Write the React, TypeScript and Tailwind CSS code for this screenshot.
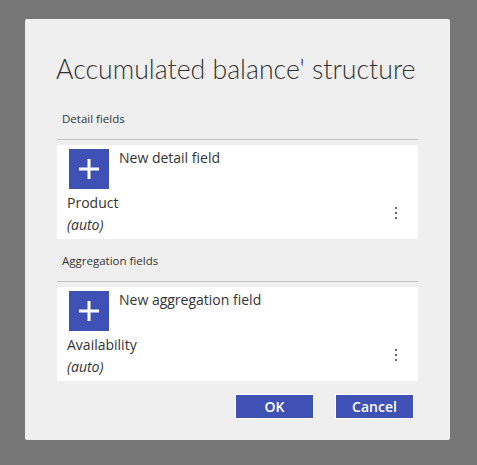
import React from 'react';

const PlusBox: React.FC = () => (
  <div className="w-10 h-10 bg-[#3f51b5] flex items-center justify-center shrink-0">
    <svg width="20" height="20" viewBox="0 0 20 20">
      <rect x="8.5" y="0" width="3" height="20" fill="#fff" />
      <rect x="0" y="8.5" width="20" height="3" fill="#fff" />
    </svg>
  </div>
);

const Kebab: React.FC = () => (
  <div className="flex flex-col gap-[3px] items-center mr-[21px] mb-[16px]">
    <span className="w-[2px] h-[2px] bg-[#666]" />
    <span className="w-[2px] h-[2px] bg-[#666]" />
    <span className="w-[2px] h-[2px] bg-[#666]" />
  </div>
);

const FieldCard: React.FC<{ addLabel: string; name: string }> = ({ addLabel, name }) => (
  <div className="bg-white h-[94px] pt-[4px] pl-[12px]">
    <div className="flex">
      <PlusBox />
      <div className="ml-[10px] -mt-[1px] text-[14px] leading-[20px] text-[#333]">{addLabel}</div>
    </div>
    <div className="flex justify-between items-end -ml-[2px] mt-[4px]">
      <div>
        <div className="text-[14px] leading-[20px] text-[#333]">{name}</div>
        <div className="text-[14px] leading-[20px] italic text-[#333] mt-[2px]">(auto)</div>
      </div>
      <Kebab />
    </div>
  </div>
);

const Section: React.FC<{ label: string; addLabel: string; name: string }> = ({ label, addLabel, name }) => (
  <div>
    <div className="pl-[5px] text-[11.5px] leading-[16px] text-[#333] h-[26px] -mt-[2px] pb-[2px] box-content">{label}</div>
    <div className="border-b border-[#c4c4c4]" />
    <div className="mt-[5px]">
      <FieldCard addLabel={addLabel} name={name} />
    </div>
  </div>
);

export default function App() {
  return (
    <div
      className="w-[477px] h-[465px] bg-[#777777] pt-[19px] pl-[25px]"
      style={{ fontFamily: '"Open Sans", "Noto Sans", sans-serif' }}
    >
      <div className="w-[425px] h-[421px] bg-[#efefef] rounded-[2px] px-[32px] pt-[32px]">
        <h1
          className="-ml-[1px] text-[26.7px] leading-[36px] font-light text-[#333] whitespace-nowrap"
          style={{ fontFamily: 'Lato, "Open Sans", sans-serif' }}
        >
          Accumulated balance' structure
        </h1>
        <div className="mt-[26px]">
          <Section label="Detail fields" addLabel="New detail field" name="Product" />
        </div>
        <div className="mt-[16px]">
          <Section label="Aggregation fields" addLabel="New aggregation field" name="Availability" />
        </div>
        <div className="flex justify-end gap-[21px] mt-[13px] pr-[4px]">
          <button className="w-[79px] h-[25px] bg-[#3f51b5] border border-white text-white text-[14px] font-semibold leading-none">
            OK
          </button>
          <button className="w-[79px] h-[25px] bg-[#3f51b5] border border-white text-white text-[14px] font-semibold leading-none">
            Cancel
          </button>
        </div>
      </div>
    </div>
  );
}
